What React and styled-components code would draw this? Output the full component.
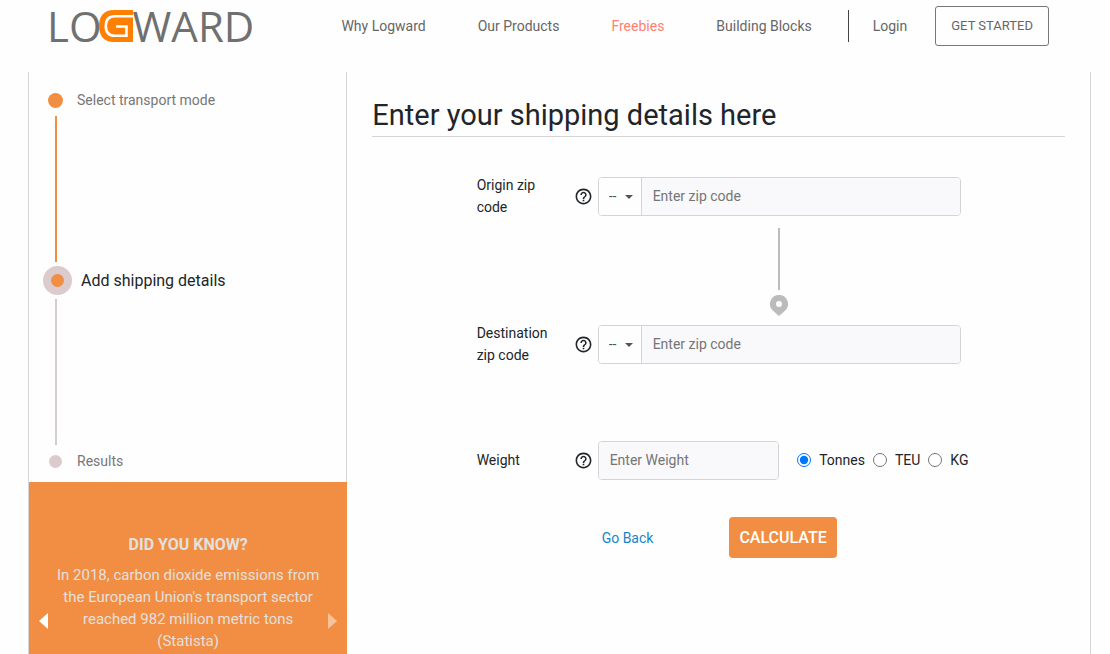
import { useState } from 'react';
import styled, { createGlobalStyle } from 'styled-components';
import { MdHelpOutline } from 'react-icons/md';

const GlobalStyle = createGlobalStyle`
    * {
        box-sizing: border-box;
    }
    body {
        margin: 0;
        background-color: #fefefe;
        color: #212529;
        font-family: Roboto, "Liberation Sans", sans-serif;
        font-size: 14px;
        line-height: 22px;
    }
    button, input, select {
        font: inherit;
        color: inherit;
    }
`;

const Header = styled.header`
    display: flex;
    align-items: center;
    justify-content: space-between;
    padding: 6px 61px 26px 47px;
`;

const Logo = styled.a`
    display: flex;
    align-items: center;
    color: #707070;
    font-family: "Open Sans", "Noto Sans", sans-serif;
    font-size: 42px;
    line-height: 40px;
    text-decoration: none;
`;

const LogoMark = styled.svg`
    display: block;
    width: 34px;
    height: 32px;
    margin: 0 0 0 -3px;
`;

const Nav = styled.nav`
    display: flex;
    align-items: center;
`;

const NavLink = styled.a`
    margin-right: 52px;
    color: ${props => props.$active ? '#ff7f6e' : '#666'};
    text-decoration: none;
`;

const Account = styled.div`
    display: flex;
    align-items: center;
    border-left: 1px solid #444;
    height: 32px;
    margin-left: -16px;
    padding-left: 24px;
`;

const LoginLink = styled.a`
    margin-right: 28px;
    color: #666;
    text-decoration: none;
`;

const OutlineButton = styled.button`
    height: 40px;
    padding: 0 15px;
    border: 1px solid #777;
    border-radius: 3px;
    background: none;
    color: #666;
    font-size: 13px;
    cursor: pointer;
`;

const Main = styled.main`
    display: grid;
    grid-template-columns: 3fr 7fr;
    min-height: calc(100vh - 72px);
    margin: 0 19px 0 28px;
    border: 1px solid #d5d5d5;
    border-width: 0 1px;
`;

const Sidebar = styled.aside`
    display: flex;
    flex-direction: column;
`;

const Steps = styled.ol`
    list-style: none;
    margin: 0;
    padding: 12px 0 5px 14px;
    border-right: 1px solid #d5d5d5;
`;

const Step = styled.li`
    display: flex;
    align-items: center;
    gap: 9px;
    height: ${props => props.$active ? '37px' : '32px'};
    color: ${props => props.$active ? '#212529' : '#777'};
    font-size: ${props => props.$active ? '16px' : '14px'};
`;

const Marker = styled.span`
    display: flex;
    align-items: center;
    justify-content: center;
    width: ${props => props.$active ? '29px' : '25px'};
    height: 29px;
    border-radius: 50%;
    background-color: ${props => props.$active ? '#dbcbcc' : 'transparent'};
`;

const Dot = styled.span`
    width: ${props => props.$size}px;
    height: ${props => props.$size}px;
    border-radius: 50%;
    background-color: ${props => props.$color};
`;

const StepLine = styled.li`
    width: 2px;
    height: 146px;
    margin-left: 12px;
    background-color: ${props => props.$done ? '#f28e43' : '#d3cdce'};
`;

const Fact = styled.section`
    display: flex;
    flex: 1;
    align-items: center;
    justify-content: space-between;
    min-height: 278px;
    padding: 0 10px;
    background-color: #f28e43;
    color: #e3e0df;
    text-align: center;
`;

const FactText = styled.div`
    align-self: flex-start;
    max-width: 272px;
    padding-top: 52px;
`;

const FactTitle = styled.h2`
    margin: 0 0 8px;
    font-size: 16px;
    font-weight: 700;
    line-height: 22px;
`;

const FactBody = styled.p`
    margin: 0;
    font-size: 15px;
`;

const ArrowButton = styled.button`
    padding: 0;
    border: none;
    background: none;
    color: ${props => props.$faded ? '#f8c39b' : '#fff'};
    cursor: pointer;
    svg {
        display: block;
    }
`;

const Content = styled.section`
    padding: 23px 25px;
`;

const Title = styled.h1`
    margin: 0 0 37px;
    padding-bottom: 1px;
    border-bottom: 1px solid #d5d5d5;
    font-size: 29px;
    font-weight: 400;
    line-height: 40px;
`;

const Form = styled.form`
    max-width: 484px;
    margin: 0 auto;
`;

const FormRow = styled.div`
    display: grid;
    grid-template-columns: 121px 1fr;
    align-items: center;
    min-height: 44px;
    margin-top: ${props => props.$spaced ? '72px' : '0'};
`;

const LabelCell = styled.div`
    display: flex;
    align-items: center;
    justify-content: space-between;
    padding-right: 5px;
    label {
        max-width: 80px;
    }
`;

const InputGroup = styled.div`
    display: flex;
    height: 39px;
    border: 1px solid #d3d4d6;
    border-radius: 4px;
    overflow: hidden;
`;

const SelectBox = styled.div`
    position: relative;
    width: 43px;
    border-right: 1px solid #d3d4d6;
    &::after {
        content: '';
        position: absolute;
        top: 17px;
        right: 8px;
        border: 4px solid transparent;
        border-top-color: #555;
        border-bottom: none;
        pointer-events: none;
    }
`;

const Select = styled.select`
    appearance: none;
    width: 100%;
    height: 100%;
    padding: 0 0 0 10px;
    border: none;
    background-color: #fefefe;
    color: #555;
`;

const Input = styled.input`
    flex: 1;
    min-width: 0;
    padding: 0 11px;
    border: none;
    background-color: #f9f9fb;
    &::placeholder {
        color: #757575;
        opacity: 1;
    }
`;

const Connector = styled.div`
    display: flex;
    flex-direction: column;
    align-items: center;
    gap: 5px;
    margin-left: 121px;
    padding: 10px 0 6px;
    &::before {
        content: '';
        width: 2px;
        height: 62px;
        background-color: #bbb;
    }
    svg {
        display: block;
    }
`;

const WeightFields = styled.div`
    display: grid;
    grid-template-columns: repeat(2, minmax(0, 1fr));
    align-items: center;
`;

const Units = styled.div`
    display: flex;
    gap: 8px;
    padding-left: 18px;
`;

const Unit = styled.label`
    display: flex;
    align-items: center;
    gap: 8px;
    input {
        width: 14px;
        height: 14px;
        margin: 0;
    }
`;

const Actions = styled.div`
    display: flex;
    align-items: center;
    gap: 76px;
    margin-top: 35px;
    padding-left: 125px;
`;

const BackLink = styled.a`
    color: #1685c8;
    text-decoration: none;
`;

const SubmitButton = styled.button`
    height: 41px;
    padding: 0 10px;
    border: none;
    border-radius: 4px;
    background-color: #f28e43;
    color: #fff;
    font-size: 16px;
    font-weight: 500;
    cursor: pointer;
`;

const links = ['Why Logward', 'Our Products', 'Freebies', 'Building Blocks'];
const units = ['Tonnes', 'TEU', 'KG'];

function FieldLabel ({id, text}) {
    return (
        <LabelCell>
            <label htmlFor={id}>{text}</label>
            <MdHelpOutline size={19} color="#212529"/>
        </LabelCell>
    )
}

function ZipField ({id, label}) {
    return (
        <FormRow>
            <FieldLabel id={id} text={label}/>
            <InputGroup>
                <SelectBox>
                    <Select aria-label={label + ' country'}>
                        <option>--</option>
                    </Select>
                </SelectBox>
                <Input id={id} type="text" placeholder="Enter zip code"/>
            </InputGroup>
        </FormRow>
    )
}

function App () {
    const [unit, setUnit] = useState('Tonnes');

    return (
        <>
            <GlobalStyle/>
            <Header>
                <Logo href="#" aria-label="Logward">
                    <span>LO</span>
                    <LogoMark viewBox="0 0 34 32">
                        <path d="M34 0H15C5 0 0 6 0 16s5 16 15 16h19z" fill="#ff7f00"/>
                        <path d="M34 6.200H16C9.500 6.200 6.800 9.800 6.800 16S9.500 25.800 16 25.800H27.500V16.500H17" fill="none" stroke="#fff" strokeWidth="2.600"/>
                    </LogoMark>
                    <span>WARD</span>
                </Logo>
                <Nav>
                    {links.map((link)=>{
                        return (
                            <NavLink key={link} href="#" $active={link === 'Freebies'}>{link}</NavLink>
                        )
                    })}
                    <Account>
                        <LoginLink href="#">Login</LoginLink>
                        <OutlineButton type="button">GET STARTED</OutlineButton>
                    </Account>
                </Nav>
            </Header>
            <Main>
                <Sidebar>
                    <Steps>
                        <Step>
                            <Marker><Dot $size={15} $color="#f28e43"/></Marker>
                            Select transport mode
                        </Step>
                        <StepLine $done aria-hidden="true"/>
                        <Step $active aria-current="step">
                            <Marker $active><Dot $size={13} $color="#f28e43"/></Marker>
                            Add shipping details
                        </Step>
                        <StepLine aria-hidden="true"/>
                        <Step>
                            <Marker><Dot $size={13} $color="#dbcbcc"/></Marker>
                            Results
                        </Step>
                    </Steps>
                    <Fact>
                        <ArrowButton type="button" aria-label="Previous">
                            <svg width="9" height="16" viewBox="0 0 9 16" fill="currentColor"><path d="M9 0v16L0 8z"/></svg>
                        </ArrowButton>
                        <FactText>
                            <FactTitle>DID YOU KNOW?</FactTitle>
                            <FactBody>
                                In 2018, carbon dioxide emissions from the European Union's transport sector reached 982 million metric tons (Statista)
                            </FactBody>
                        </FactText>
                        <ArrowButton type="button" aria-label="Next" $faded>
                            <svg width="9" height="16" viewBox="0 0 9 16" fill="currentColor"><path d="M0 0v16l9-8z"/></svg>
                        </ArrowButton>
                    </Fact>
                </Sidebar>
                <Content>
                    <Title>Enter your shipping details here</Title>
                    <Form onSubmit={(e)=>e.preventDefault()}>
                        <ZipField id="origin" label="Origin zip code"/>
                        <Connector>
                            <svg width="18" height="21" viewBox="0 0 18 21" fill="#bbb">
                                <path fillRule="evenodd" d="M9 0a9 9 0 0 0-6.500 15.200L9 21l6.500-5.800A9 9 0 0 0 9 0zm0 6a3 3 0 1 1 0 6 3 3 0 0 1 0-6z"/>
                            </svg>
                        </Connector>
                        <ZipField id="destination" label="Destination zip code"/>
                        <FormRow $spaced>
                            <FieldLabel id="weight" text="Weight"/>
                            <WeightFields>
                                <InputGroup>
                                    <Input id="weight" type="text" placeholder="Enter Weight"/>
                                </InputGroup>
                                <Units role="radiogroup" aria-label="Weight unit">
                                    {units.map((item)=>{
                                        return (
                                            <Unit key={item}>
                                                <input type="radio" name="unit" checked={unit === item} onChange={()=>setUnit(item)}/>
                                                {item}
                                            </Unit>
                                        )
                                    })}
                                </Units>
                            </WeightFields>
                        </FormRow>
                        <Actions>
                            <BackLink href="#">Go Back</BackLink>
                            <SubmitButton type="submit">CALCULATE</SubmitButton>
                        </Actions>
                    </Form>
                </Content>
            </Main>
        </>
    )
}

export default App;
